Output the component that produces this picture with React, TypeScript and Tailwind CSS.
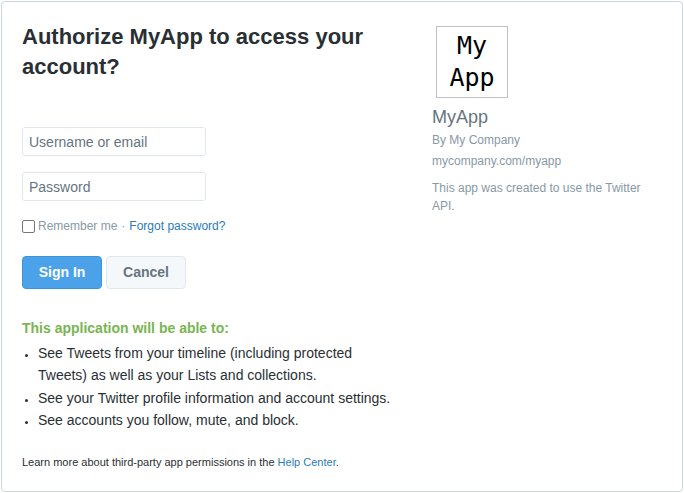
const App = () => {
 return (
  <div className="w-[684px] h-[493px] bg-white p-px font-['Liberation_Sans',Arial,sans-serif]">
   <div className="flex h-[491px] w-[682px] rounded border border-[#ccd6dd] pt-5 pl-5">
    {/* Left column */}
    <div className="flex w-[380px] flex-col">
     <h1 className="text-[22px] font-bold leading-[30px] text-[#292f33]">
      Authorize MyApp to access your account?
     </h1>

     <form className="mt-[45px] flex flex-col">
      <input
       type="text"
       placeholder="Username or email"
       className="h-[29px] w-[184px] rounded-[3px] border border-[#e1e8ed] px-[6px] text-[14px] text-[#292f33] placeholder:text-[#66757f] outline-none"
      />
      <input
       type="password"
       placeholder="Password"
       className="mt-4 h-[29px] w-[184px] rounded-[3px] border border-[#e1e8ed] px-[6px] text-[14px] text-[#292f33] placeholder:text-[#66757f] outline-none"
      />

      <div className="mt-[17px] flex items-center text-[12px] leading-[16px]">
       <input
        type="checkbox"
        id="remember"
        className="m-0 h-[13px] w-[13px] appearance-none rounded-[2px] border border-[#767676] bg-white"
       />
       <label htmlFor="remember" className="ml-[3px] text-[#8899a6]">
        Remember me
       </label>
       <span className="mx-[4px] text-[#8899a6]">·</span>
       <a href="#" className="text-[#2b7bb9]">
        Forgot password?
       </a>
      </div>

      <div className="mt-[22px] flex gap-1">
       <button
        type="button"
        className="h-[33px] w-[80px] rounded-[4px] border border-[#3b94d9] bg-[#4ca2e8] text-[14px] font-bold text-white"
       >
        Sign In
       </button>
       <button
        type="button"
        className="h-[33px] w-[80px] rounded-[4px] border border-[#e1e8ed] bg-[#f5f8fa] text-[14px] font-bold text-[#66757f]"
       >
        Cancel
       </button>
      </div>
     </form>

     <div className="mt-[30px]">
      <p className="text-[14px] font-bold leading-[18px] text-[#79b551]">
       This application will be able to:
      </p>
      <ul className="mt-[5px] list-disc pl-4 text-[14px] leading-[22.4px] text-[#292f33] marker:text-[11px]">
       <li>
        See Tweets from your timeline (including protected Tweets) as well
        as your Lists and collections.
       </li>
       <li>See your Twitter profile information and account settings.</li>
       <li>See accounts you follow, mute, and block.</li>
      </ul>
     </div>

     <p className="mt-[23px] text-[11px] leading-[14px] text-[#292f33]">
      Learn more about third-party app permissions in the{" "}
      <a href="#" className="text-[#2b7bb9]">
       Help Center
      </a>
      .
     </p>
    </div>

    {/* Right column */}
    <div className="ml-[30px] flex w-[215px] flex-col">
     <div className="ml-1 mt-1 flex h-[72px] w-[72px] flex-col items-center justify-center border border-[#c0c0c0] font-['DejaVu_Sans_Mono',monospace] text-[25px] leading-[32px] text-black">
      <span>My</span>
      <span>App</span>
     </div>
     <p className="mt-[8px] text-[18px] leading-[22px] text-[#66757f]">MyApp</p>
     <p className="mt-[3px] text-[12px] leading-[18px] text-[#8899a6]">
      By My Company
     </p>
     <p className="mt-[3px] text-[12px] leading-[18px] text-[#8899a6]">
      mycompany.com/myapp
     </p>
     <p className="mt-[9px] text-[12px] leading-[18px] text-[#8899a6]">
      This app was created to use the Twitter API.
     </p>
    </div>
   </div>
  </div>
 );
};

export default App;
